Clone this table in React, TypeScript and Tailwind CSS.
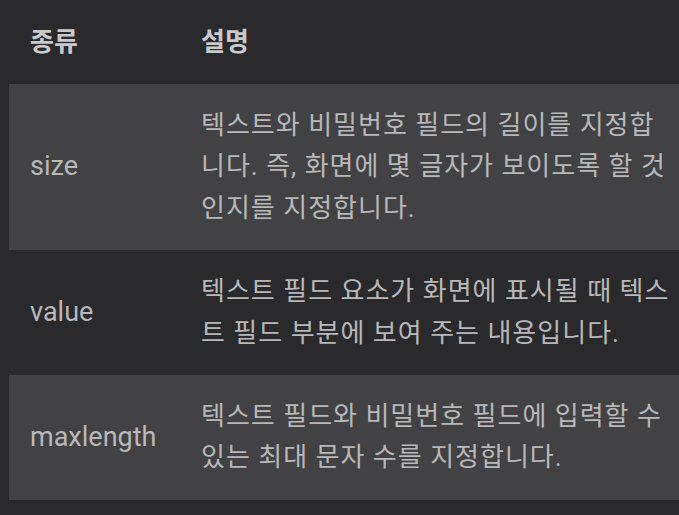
const rows = [
  {
    name: "size",
    desc: "텍스트와 비밀번호 필드의 길이를 지정합니다. 즉, 화면에 몇 글자가 보이도록 할 것인지를 지정합니다.",
  },
  {
    name: "value",
    desc: "텍스트 필드 요소가 화면에 표시될 때 텍스트 필드 부분에 보여 주는 내용입니다.",
  },
  {
    name: "maxlength",
    desc: "텍스트 필드와 비밀번호 필드에 입력할 수 있는 최대 문자 수를 지정합니다.",
  },
]

export default function App() {
  return (
    <div
      className="min-h-[515px] w-[679px] bg-[#2a2a2c] pl-[9px] pb-[17px]"
      style={{ fontFamily: 'Roboto, "Noto Sans CJK KR", sans-serif' }}
    >
      <table className="w-full border-collapse text-left">
        <thead>
          <tr className="h-[84px]">
            {/* 헤더 */}
            <th className="w-[171px] px-[21px] text-[26px] font-bold text-[#c9c9cb]">종류</th>
            <th className="px-[21px] text-[26px] font-bold text-[#c9c9cb]">설명</th>
          </tr>
        </thead>
        <tbody>
          {rows.map((row, i) => (
            <tr key={row.name} className={i % 2 === 0 ? "bg-[#424244]" : ""}>
              <td className="px-[21px] py-[21px] align-middle text-[27px] leading-[41.4px] text-[#b8b8ba]">
                {row.name}
              </td>
              <td className="py-[21px] pl-[21px] pr-[8px] align-middle text-[26px] leading-[41.4px] tracking-[1px] text-[#b8b8ba] break-all">
                {row.desc}
              </td>
            </tr>
          ))}
        </tbody>
      </table>
    </div>
  )
}
